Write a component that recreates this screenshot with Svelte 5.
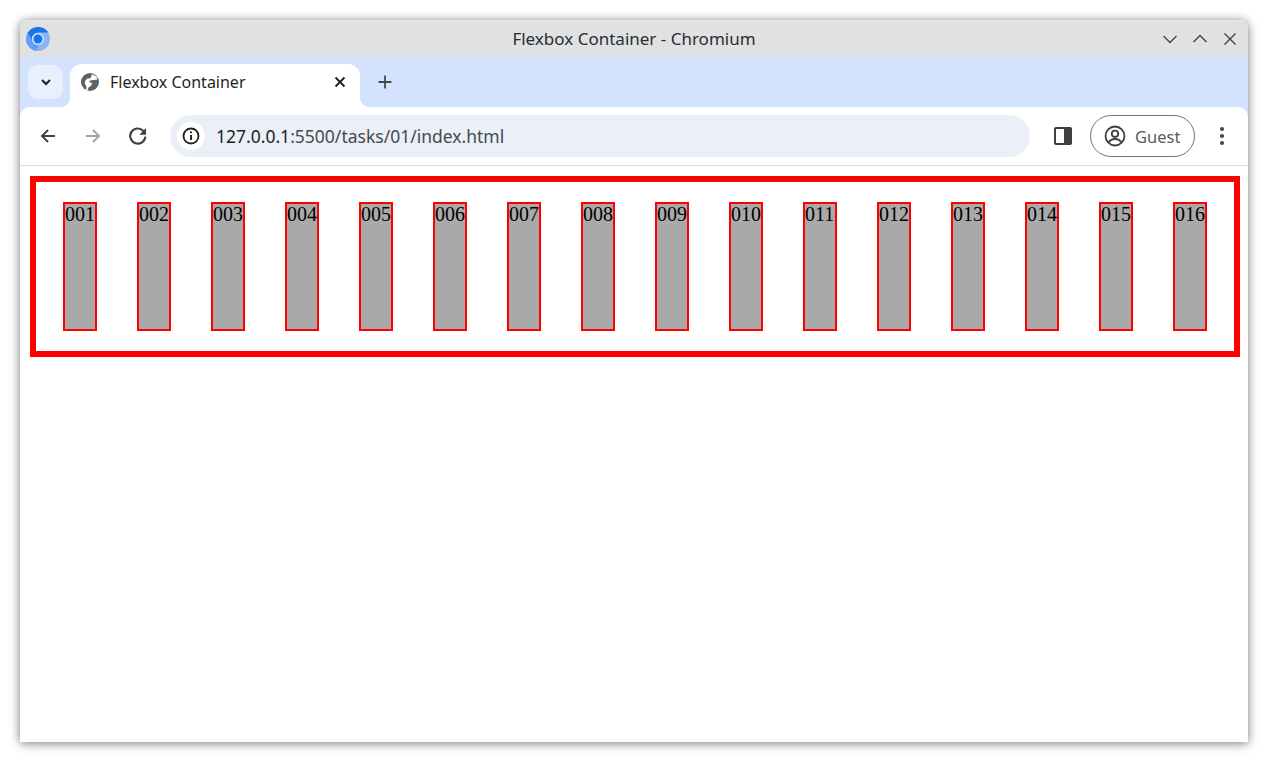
<script>
  const items = Array.from({ length: 16 }, (_, i) => String(i + 1).padStart(3, '0'));
</script>

<div class="page">
  <div class="window">

    <!-- TITLE BAR -->
    <div class="titlebar">
      <svg class="app-logo" viewBox="0 0 24 24" width="24" height="24">
        <circle cx="12" cy="12" r="12" fill="#8ab4f8" />
        <path d="M12 0a12 12 0 0 0-10.4 6L6 14a6.5 6.5 0 0 1 6-8.500h10.400A12 12 0 0 0 12 0z" fill="#1a73e8" />
        <path d="M1.600 6A12 12 0 0 0 10 23.800l4.200-7.300A6 6 0 0 1 6 14z" fill="#669df6" />
        <circle cx="12" cy="12" r="6" fill="#d2e3fc" />
        <circle cx="12" cy="12" r="4.500" fill="#1a73e8" />
      </svg>
      <div class="title">Flexbox Container - Chromium</div>
      <div class="win-btns">
        <svg viewBox="0 0 16 16" width="16" height="16"><path d="M1.500 5l6.500 6.500L14.500 5" /></svg>
        <svg viewBox="0 0 16 16" width="16" height="16"><path d="M1.500 11L8 4.500 14.500 11" /></svg>
        <svg viewBox="0 0 16 16" width="16" height="16"><path d="M2.500 2.500l11 11M13.500 2.500l-11 11" /></svg>
      </div>
    </div>

    <!-- TAB STRIP -->
    <div class="tabstrip">
      <div class="tab-search">
        <svg viewBox="0 0 12 12" width="12" height="12"><path d="M2 4l4 4 4-4" /></svg>
      </div>
      <div class="tab">
        <svg class="globe" viewBox="0 0 18 18" width="18" height="18">
          <circle cx="9" cy="9" r="9" fill="#5f6368" />
          <path d="M11 1.200l4.500 2.300 1 3-3.500.6-3 .2-2.300 1.400 3.300 1.300-.7 2.500-3 2.300-.8 3-1.500-.7.500-3.500-1.700-2.600L4 8l2.500-2.500 3-.3z" fill="#fff" />
        </svg>
        <span class="tab-label">Flexbox Container</span>
        <svg class="tab-close" viewBox="0 0 12 12" width="12" height="12"><path d="M1.500 1.500l9 9M10.500 1.500l-9 9" /></svg>
      </div>
      <svg class="new-tab" viewBox="0 0 14 14" width="14" height="14"><path d="M7 .5v13M.5 7h13" /></svg>
    </div>

    <!-- TOOLBAR -->
    <div class="toolbar">
      <svg class="nav" viewBox="0 0 16 16" width="16" height="16"><path d="M15 8H2M8 2L2 8l6 6" /></svg>
      <svg class="nav off" viewBox="0 0 16 16" width="16" height="16"><path d="M1 8h13M8 2l6 6-6 6" /></svg>
      <svg class="nav reload" viewBox="0 0 18 18" width="20" height="20">
        <path d="M15.600 9.500a6.800 6.800 0 1 1-2-5.300L15.500 6" />
        <path class="solid" d="M16.200 1.800v6h-6z" />
      </svg>
      <div class="omnibox">
        <div class="info">
          <svg viewBox="0 0 18 18" width="18" height="18">
            <circle cx="9" cy="9" r="7.500" />
            <path d="M9 8v5" />
            <circle class="dot" cx="9" cy="5.300" r="1.100" />
          </svg>
        </div>
        <span class="url"><span class="host">127.0.0.1</span>:5500/tasks/01/index.html</span>
      </div>
      <svg class="panel" viewBox="0 0 20 20" width="20" height="20">
        <rect x="1" y="1" width="18" height="18" rx="2" fill="#3c4043" />
        <rect x="3" y="3" width="8" height="14" fill="#fff" />
      </svg>
      <div class="profile">
        <svg viewBox="0 0 22 22" width="22" height="22">
          <circle cx="11" cy="11" r="9.500" />
          <circle cx="11" cy="8.800" r="3.200" />
          <path d="M4.500 17.500c2-3 4-3.500 6.500-3.500s4.500.5 6.500 3.500" />
        </svg>
        <span class="guest">Guest</span>
      </div>
      <div class="menu"><i></i><i></i><i></i></div>
    </div>

    <!-- PAGE -->
    <div class="content">
      <div class="container">
        {#each items as item}
          <div class="item">{item}</div>
        {/each}
      </div>
    </div>

  </div>
</div>

<style>
  :global(body) {
    background: #fff;
  }

  .page {
    height: 762px;
    box-sizing: border-box;
    padding: 20px;
    overflow: hidden;
  }

  .window {
    height: 722px;
    display: flex;
    flex-direction: column;
    background: #d3e3fd;
    border-radius: 7px 7px 0 0;
    overflow: hidden;
    box-shadow: 0 1px 8px rgba(0, 0, 0, 0.4), 0 2px 14px rgba(0, 0, 0, 0.18);
    font-family: "Noto Sans", sans-serif;
  }

  /* TITLE BAR */
  .titlebar {
    height: 37px;
    flex: none;
    display: flex;
    align-items: center;
    position: relative;
    background: #dfe1e3;
    border-top: 1px solid #e9ebec;
    box-sizing: border-box;
  }

  .app-logo {
    margin-left: 6px;
  }

  .title {
    position: absolute;
    left: 0;
    right: 0;
    text-align: center;
    font-size: 17px;
    line-height: 34px;
    color: #2b2d2f;
  }

  .win-btns {
    margin-left: auto;
    margin-right: 10px;
    display: flex;
    gap: 14px;
  }

  .win-btns path {
    fill: none;
    stroke: #3c4043;
    stroke-width: 1.300;
  }

  /* TAB STRIP */
  .tabstrip {
    height: 50px;
    flex: none;
    display: flex;
    align-items: flex-end;
    background: #d3e3fd;
    position: relative;
    z-index: 1;
  }

  .tab-search {
    width: 35px;
    height: 34px;
    margin: 0 0 8px 8px;
    border-radius: 10px;
    background: #e9f0fd;
    display: flex;
    align-items: center;
    justify-content: center;
  }

  .tab-search path {
    fill: none;
    stroke: #1f1f1f;
    stroke-width: 2;
  }

  .tab {
    width: 290px;
    height: 43px;
    margin-left: 7px;
    box-sizing: border-box;
    padding: 0 14px 7px 11px;
    display: flex;
    align-items: center;
    background: #fff;
    border-radius: 12px 12px 0 0;
    position: relative;
  }

  .tab::before,
  .tab::after {
    content: "";
    position: absolute;
    bottom: 0;
    width: 10px;
    height: 10px;
  }

  .tab::before {
    left: -10px;
    background: radial-gradient(circle at 0 0, #d3e3fd 10px, #fff 10.500px);
  }

  .tab::after {
    right: -10px;
    background: radial-gradient(circle at 100% 0, #d3e3fd 10px, #fff 10.500px);
  }

  .tab-label {
    margin-left: 11px;
    font-size: 16px;
    color: #1f1f1f;
  }

  .tab-close {
    margin-left: auto;
  }

  .tab-close path {
    fill: none;
    stroke: #1f1f1f;
    stroke-width: 1.800;
  }

  .new-tab {
    margin: 0 0 18px 18px;
  }

  .new-tab path {
    fill: none;
    stroke: #44474a;
    stroke-width: 1.800;
  }

  /* TOOLBAR */
  .toolbar {
    height: 59px;
    flex: none;
    box-sizing: border-box;
    display: flex;
    align-items: center;
    background: #fff;
    border-bottom: 1px solid #dcdee0;
    border-radius: 10px 10px 0 0;
    padding-bottom: 1px;
  }

  .nav {
    flex: none;
    margin-left: 20px;
  }

  .nav path {
    fill: none;
    stroke: #3c4043;
    stroke-width: 1.900;
  }

  .nav.off {
    margin-left: 29px;
  }

  .nav.off path {
    stroke: #a0a2a4;
  }

  .nav.reload {
    margin-left: 27px;
  }

  .nav .solid {
    fill: #3c4043;
    stroke: none;
  }

  .omnibox {
    width: 860px;
    height: 42px;
    flex: none;
    margin-left: 22px;
    display: flex;
    align-items: center;
    background: #ebeff8;
    border-radius: 21px;
  }

  .info {
    width: 28px;
    height: 28px;
    margin-left: 7px;
    border-radius: 50%;
    background: #fff;
    display: flex;
    align-items: center;
    justify-content: center;
  }

  .info circle {
    fill: none;
    stroke: #1f1f1f;
    stroke-width: 1.800;
  }

  .info path {
    stroke: #1f1f1f;
    stroke-width: 1.900;
  }

  .info .dot {
    fill: #1f1f1f;
    stroke: none;
  }

  .url {
    margin-left: 11px;
    font-size: 17.500px;
    color: #474a4d;
  }

  .host {
    color: #1f1f1f;
  }

  .panel {
    flex: none;
    margin-left: 23px;
  }

  .profile {
    width: 105px;
    height: 42px;
    flex: none;
    box-sizing: border-box;
    margin-left: 17px;
    padding-left: 13px;
    display: flex;
    align-items: center;
    gap: 9px;
    border: 1px solid #747775;
    border-radius: 21px;
    font-size: 16.500px;
    color: #5a5d60;
  }

  .profile svg {
    flex: none;
  }

  .guest {
    padding-top: 2px;
  }

  .profile circle,
  .profile path {
    fill: none;
    stroke: #3c4043;
    stroke-width: 1.800;
  }

  .menu {
    margin-left: 25px;
    display: flex;
    flex-direction: column;
    gap: 3px;
  }

  .menu i {
    width: 4px;
    height: 4px;
    border-radius: 50%;
    background: #3c4043;
  }

  /* PAGE */
  .content {
    flex: 1;
    padding: 10px 8px 10px 10px;
    background: #fff;
    font-family: "Liberation Serif", serif;
  }

  .container {
    display: flex;
    justify-content: space-between;
    box-sizing: border-box;
    height: 181px;
    padding: 20px 27px;
    border: 6px solid #f00;
  }

  .item {
    width: 34px;
    height: 129px;
    box-sizing: border-box;
    flex: none;
    border: 2px solid #f00;
    background: #a9a9a9;
    font-size: 20px;
    line-height: 21px;
    color: #000;
  }
</style>
